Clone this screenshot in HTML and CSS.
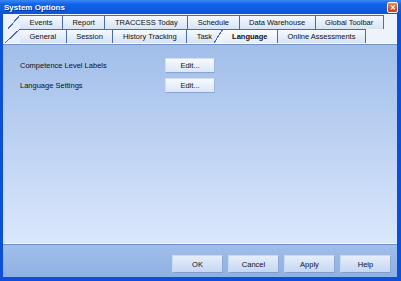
FILE: index.html
```html
<!DOCTYPE html>
<html lang="en">
  <head>
    <meta charset="UTF-8" />
    <title>System Options</title>
    <link rel="stylesheet" href="styles.css">
  </head>
  <body>
    <div class="window">
      <div class="titlebar">
        <span class="title">System Options</span>
        <button class="close" title="Close">&#x2715;</button>
      </div>
      <div class="client">
        <div class="tabs">
          <div class="tab-row back">
            <div class="tab first">Events</div>
            <div class="tab">Report</div>
            <div class="tab">TRACCESS Today</div>
            <div class="tab">Schedule</div>
            <div class="tab">Data Warehouse</div>
            <div class="tab">Global Toolbar</div>
          </div>
          <div class="tab-row front">
            <div class="tab first">General</div>
            <div class="tab">Session</div>
            <div class="tab">History Tracking</div>
            <div class="tab">Task</div>
            <div class="tab selected">Language</div>
            <div class="tab">Online Assessments</div>
          </div>
        </div>
        <div class="panel">
          <div class="options">
            <span class="label">Competence Level Labels</span>
            <button class="btn">Edit...</button>
            <span class="label">Language Settings</span>
            <button class="btn">Edit...</button>
          </div>
        </div>
        <div class="footer">
          <button class="btn btn-footer">OK</button>
          <button class="btn btn-footer">Cancel</button>
          <button class="btn btn-footer">Apply</button>
          <button class="btn btn-footer">Help</button>
        </div>
      </div>
    </div>
  </body>
</html>
```

FILE: styles.css
```css
body {
  margin: 0;
  font-family: "Liberation Sans", Arial, sans-serif;
  font-size: 7.5px;
  color: #111;
}
.window {
  width: 401px;
  height: 281px;
  display: flex;
  flex-direction: column;
  background-color: #0c4fd8;
}
.titlebar {
  height: 14px;
  display: flex;
  align-items: center;
  padding: 0 3px 0 4px;
  background: linear-gradient(#3b88f6 0%, #1262e8 30%, #0a56dc 100%);
}
.title {
  color: white;
  font-weight: bold;
  font-size: 8px;
  text-shadow: 1px 1px 0 #0a2f8c;
}
.close {
  margin-left: auto;
  width: 11px;
  height: 11px;
  padding: 0;
  border: 1px solid #fff;
  border-radius: 2px;
  background: linear-gradient(#ee8a64, #d9502a 60%, #c6421f);
  color: white;
  font-size: 7px;
  font-weight: bold;
  line-height: 9px;
  text-align: center;
}
.client {
  flex: 1;
  display: flex;
  flex-direction: column;
  margin: 0 4px 4px 3px;
  background-color: #eef3fb;
}

/* tab strip */
.tabs {
  height: 30px;
  box-sizing: border-box;
  padding-top: 1px;
  border-bottom: 1px solid #f7faff;
}
.tab-row {
  height: 14px;
  display: flex;
  padding-left: 17px;
}
.tab {
  position: relative;
  height: 14px;
  box-sizing: border-box;
  padding: 0 9.5px;
  line-height: 13px;
  white-space: nowrap;
  border-top: 1px solid #4b6ca6;
  border-right: 1px solid #4b6ca6;
  background: linear-gradient(#f6f9fe, #d6e3f6);
}
.tab.first::before,
.tab.selected::before {
  content: "";
  position: absolute;
  top: -1px;
  bottom: 0;
  right: 100%;
  width: 12px;
  background: linear-gradient(
    to bottom right,
    transparent calc(50% - 0.6px),
    #4b6ca6 calc(50% - 0.6px),
    #4b6ca6 calc(50% + 0.5px),
    #e9f0fa calc(50% + 0.5px)
  );
}
.front .tab.first::before {
  width: 15px;
}
.tab.selected {
  z-index: 1;
  font-weight: bold;
  background: linear-gradient(#fbfdff, #e4ecf9);
}
.tab.selected::before {
  width: 9px;
  background: linear-gradient(
    to bottom right,
    transparent calc(50% - 0.6px),
    #4b6ca6 calc(50% - 0.6px),
    #4b6ca6 calc(50% + 0.5px),
    #f0f5fc calc(50% + 0.5px)
  );
}

/* content */
.panel {
  flex: 1;
  padding: 13px 0 0 17px;
  border-top: 1px solid #7693c8;
  border-bottom: 1px solid #f2f7ff;
  background: linear-gradient(#a1bee9, #dae7fb);
}
.options {
  display: grid;
  grid-template-columns: 145px 50px;
  row-gap: 5px;
  align-items: center;
}
.btn {
  height: 15px;
  padding: 0;
  font-family: inherit;
  font-size: 7.5px;
  color: #111;
  border: 1px solid;
  border-color: #d2def2 #9fb6de #8aa4d2 #d2def2;
  background: linear-gradient(#f7faff, #dbe6f7);
}
.footer {
  height: 33px;
  box-sizing: border-box;
  display: flex;
  justify-content: flex-end;
  gap: 5px;
  padding: 10px 6px 0 0;
  border-top: 1px solid #6f8fc7;
  background: linear-gradient(#a0bee9, #8fb0e3);
}
.btn-footer {
  width: 51px;
  height: 18px;
  border-color: #c9daf4 #8aa7d6 #7f9dd0 #c9daf4;
  background: linear-gradient(#e6eefb, #c5d7f3);
}
```
